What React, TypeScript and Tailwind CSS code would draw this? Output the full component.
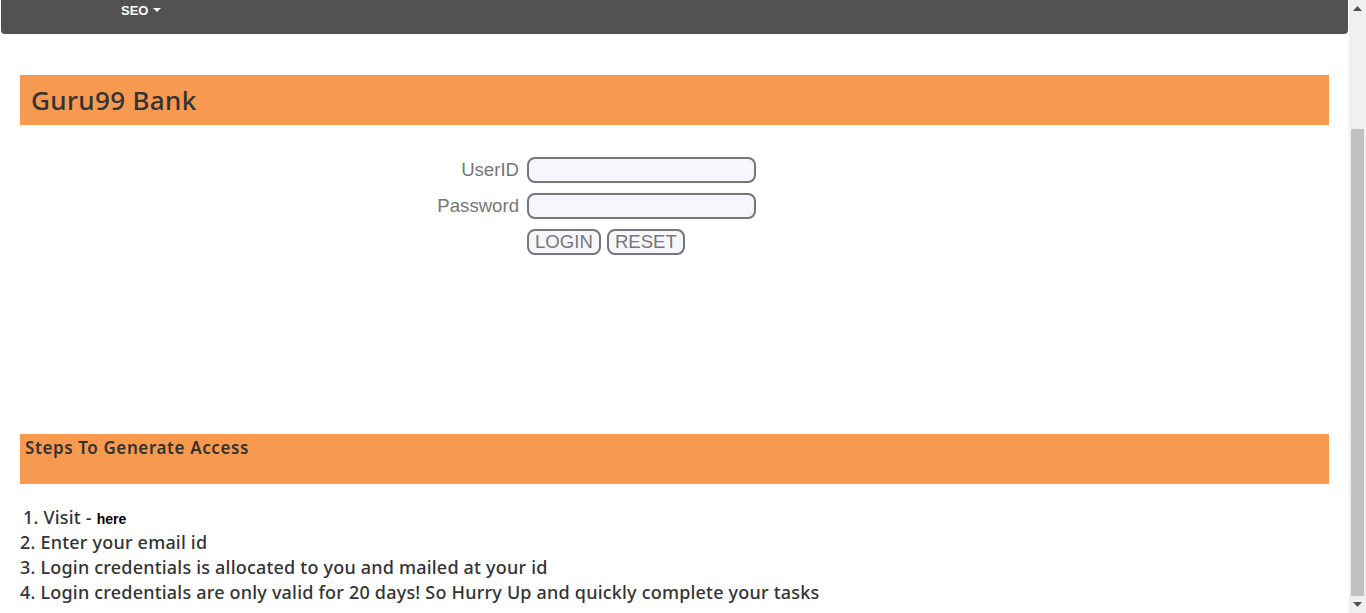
import React from 'react';

const steps = [
  'Enter your email id',
  'Login credentials is allocated to you and mailed at your id',
  'Login credentials are only valid for 20 days! So Hurry Up and quickly complete your tasks',
];

const quick = { fontFamily: '"Noto Sans", "Open Sans", sans-serif' };
const arial = { fontFamily: '"Liberation Sans", Arial, sans-serif' };

const Scrollbar = () => (
  <div className="w-[17px] h-full flex flex-col bg-[#f0f0f0] shrink-0">
    <div className="h-[17px] flex items-center justify-center">
      <svg width="9" height="5" viewBox="0 0 9 5"><path d="M4.5 0L9 5H0z" fill="#505050" /></svg>
    </div>
    <div className="h-[112px]" />
    <div className="mx-[2px] flex-1 bg-[#c1c1c1]" />
    <div className="h-[17px] flex items-center justify-center">
      <svg width="9" height="5" viewBox="0 0 9 5"><path d="M0 0H9L4.5 5z" fill="#505050" /></svg>
    </div>
  </div>
);

export default function App() {
  return (
    <div className="flex h-[613px] w-full overflow-hidden bg-white">
      <div className="flex-1 flex flex-col min-w-0">
        <nav className="ml-px mr-px h-[34px] bg-[#525252] rounded-b-[4px] flex shrink-0">
          <div className="ml-[120px] pt-[1px] flex items-start gap-[5px] text-white text-[13px] font-bold" style={arial}>
            SEO
            <span className="mt-[7px] border-x-[4px] border-x-transparent border-t-[4px] border-t-white" />
          </div>
        </nav>

        <main className="pl-5 pr-[20px] pt-[41px] flex flex-col">
          <div className="h-[50px] bg-[#f79a50] flex items-center pl-[11px]">
            <h1 className="text-[26px] font-medium text-[#333] tracking-[0.35px]" style={quick}>
              Guru99 Bank
            </h1>
          </div>

          <form
            className="mt-[32px] grid grid-cols-[499px_auto] gap-x-2 gap-y-[10px] items-center text-[18.6px] leading-[26px] text-[#777]"
            style={arial}
          >
            <label className="text-right">UserID</label>
            <input className="w-[229px] h-[26px] border-2 border-[#767676] rounded-[8px] bg-[#f5f7fd] outline-none" />
            <label className="text-right">Password</label>
            <input
              type="password"
              className="w-[229px] h-[26px] border-2 border-[#767676] rounded-[8px] bg-[#f5f7fd] outline-none"
            />
            <div />
            <div className="flex gap-[6px]">
              <button type="button" className="h-[26px] px-[6px] border-2 border-[#767676] rounded-[8px] bg-[#f5f7fd] leading-none text-[#777]">
                LOGIN
              </button>
              <button type="button" className="h-[26px] px-[6px] border-2 border-[#767676] rounded-[8px] bg-[#f5f7fd] leading-none text-[#777]">
                RESET
              </button>
            </div>
          </form>

          <div className="mt-[179px] h-[50px] bg-[#f79a50] pl-[5px] pt-[3px]">
            <h4 className="text-[17px] font-semibold text-[#333] leading-[22px] tracking-[0.6px]" style={quick}>
              Steps To Generate Access
            </h4>
          </div>

          <ol className="mt-[21px] text-[18px] leading-[25px] font-medium text-[#333] tracking-[0.2px]" style={quick}>
            <li className="pl-[3px]">
              1. Visit -{' '}
              <a className="text-[14px] leading-none font-bold text-black tracking-normal" style={arial}>
                here
              </a>
            </li>
            {steps.map((s, i) => (
              <li key={i}>
                {i + 2}. {s}
              </li>
            ))}
          </ol>
        </main>
      </div>
      <Scrollbar />
    </div>
  );
}
